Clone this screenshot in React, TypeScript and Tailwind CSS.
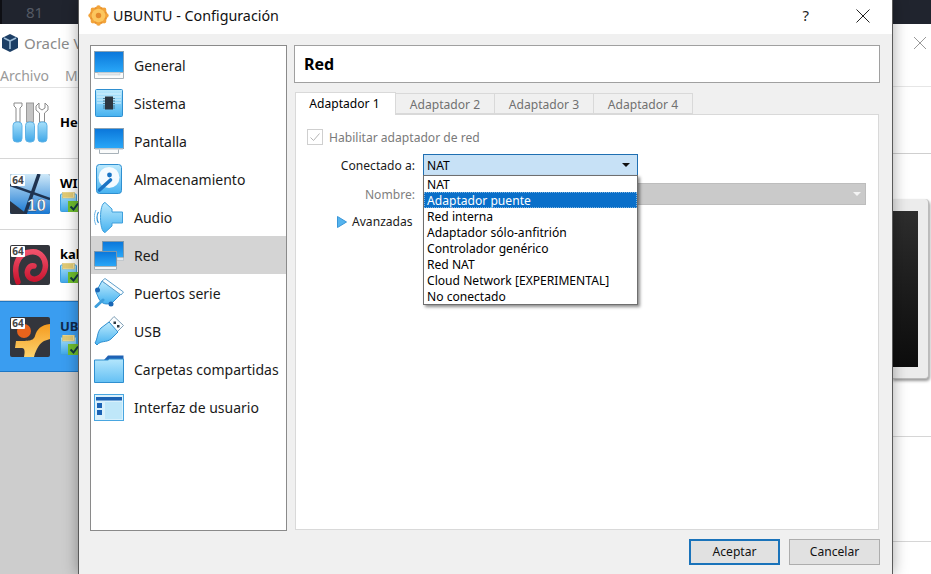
const Gear = () => (
  <svg width="21" height="21" viewBox="0 0 20 20">
    <circle cx="10" cy="10" r="8.5" fill="#e8912d" />
    <g fill="#f2a33a">
      <circle cx="10" cy="2.5" r="2.2" />
      <circle cx="10" cy="17.5" r="2.2" />
      <circle cx="2.5" cy="10" r="2.2" />
      <circle cx="17.5" cy="10" r="2.2" />
      <circle cx="4.7" cy="4.7" r="2.2" />
      <circle cx="15.3" cy="4.7" r="2.2" />
      <circle cx="4.7" cy="15.3" r="2.2" />
      <circle cx="15.3" cy="15.3" r="2.2" />
    </g>
    <circle cx="10" cy="10" r="6.5" fill="#fcc65e" />
    <circle cx="10" cy="10" r="2.6" fill="#e58a2c" />
  </svg>
);

const Gradients = () => (
  <svg className="absolute w-0 h-0">
    <defs>
      <linearGradient id="screen" x1="0" y1="0" x2="0" y2="1">
        <stop offset="0" stopColor="#0a76da" />
        <stop offset="1" stopColor="#2aa8f8" />
      </linearGradient>
      <linearGradient id="light" x1="0" y1="0" x2="0" y2="1">
        <stop offset="0" stopColor="#bdeafd" />
        <stop offset="1" stopColor="#46b2f0" />
      </linearGradient>
      <linearGradient id="folder" x1="0" y1="0" x2="0" y2="1">
        <stop offset="0" stopColor="#b4e6fc" />
        <stop offset="1" stopColor="#64c0f4" />
      </linearGradient>
      <linearGradient id="handle" x1="0" y1="0" x2="0" y2="1">
        <stop offset="0" stopColor="#a8e0fa" />
        <stop offset="1" stopColor="#3fa7e8" />
      </linearGradient>
      <linearGradient id="ubu" x1="0" y1="0" x2="0" y2="1">
        <stop offset="0" stopColor="#f59a1e" />
        <stop offset="1" stopColor="#fcd36e" />
      </linearGradient>
      <linearGradient id="kali" x1="0" y1="0" x2="0" y2="1">
        <stop offset="0" stopColor="#f0506a" />
        <stop offset="1" stopColor="#c8142e" />
      </linearGradient>
      <linearGradient id="win" x1="0" y1="0" x2="0" y2="1">
        <stop offset="0" stopColor="#cfe9f9" />
        <stop offset="1" stopColor="#1878d2" />
      </linearGradient>
    </defs>
  </svg>
);

const icons: Record<string, React.ReactNode> = {
  General: (
    <svg width="30" height="28" viewBox="0 0 30 28">
      <rect x="0.5" y="0.5" width="29" height="21" fill="url(#screen)" stroke="#8aa2b4" />
      <path d="M.5 21.5h29v6H.5z" fill="#fafbfb" stroke="#a8b2b9" />
      <path d="M4 21.5h22v2.5H4z" fill="#e2e8ec" stroke="#b9c4cb" strokeWidth="0.5" />
    </svg>
  ),
  Sistema: (
    <svg width="28" height="28" viewBox="0 0 28 28">
      <rect x="0.5" y="0.5" width="27" height="27" rx="1" fill="url(#light)" stroke="#2f8fd0" />
      <path d="M2 5h24M2 8h24M2 11h24M2 14h24" stroke="#d6f2fe" strokeWidth="1" />
      <rect x="10" y="7.5" width="8" height="13" fill="#2c3640" />
      <path d="M8 9.5h2M8 12h2M8 14.5h2M8 17h2M8 19h2M18 9.5h2M18 12h2M18 14.5h2M18 17h2M18 19h2" stroke="#3a6478" strokeWidth="0.8" />
    </svg>
  ),
  Pantalla: (
    <svg width="30" height="26" viewBox="0 0 30 26">
      <rect x="0.5" y="0.5" width="29" height="20" fill="url(#screen)" stroke="#8aa2b4" />
      <path d="M5.5 20.5h19v5h-19z" fill="#fafbfb" stroke="#a8b2b9" />
      <path d="M1 20.5h28v1.2H1z" fill="#c9d2d8" />
    </svg>
  ),
  Almacenamiento: (
    <svg width="26" height="30" viewBox="0 0 26 30">
      <rect x="0.5" y="0.5" width="25" height="29" rx="3" fill="url(#light)" stroke="#2f8fd0" />
      <circle cx="13" cy="13.5" r="10.5" fill="#f4fbff" />
      <circle cx="13.5" cy="11" r="2.4" fill="#1a74c4" />
      <path d="M3.5 26 14.5 16" stroke="#1a74c4" strokeWidth="3.6" strokeLinecap="round" />
    </svg>
  ),
  Audio: (
    <svg width="30" height="31" viewBox="0 0 30 31">
      <path d="M11 .5 18 7V10h10.5v11H18v3L11 30.5C8 30 6.5 23 6.5 15.5S8 1 11 .5Z" fill="url(#light)" stroke="#3e9fdc" />
      <path d="M4.5 10C2.5 13 2.5 18 4.5 21" fill="none" stroke="#2f8fd0" strokeWidth="1.2" />
      <path d="M2 8C-.3 13-.3 18 2 23" fill="none" stroke="#6bb4e6" />
    </svg>
  ),
  Red: (
    <svg width="30" height="29" viewBox="0 0 30 29">
      <rect x="8.5" y="0.5" width="21" height="16" fill="url(#screen)" stroke="#7d98ad" />
      <path d="M23 16.5h6.5v3H23z" fill="#dfe8ee" stroke="#a8b2b9" strokeWidth="0.5" />
      <rect x="0.5" y="10.5" width="22" height="15" fill="#fff" />
      <rect x="0.5" y="10.5" width="22" height="15" fill="url(#screen)" stroke="#7d98ad" />
      <path d="M.5 25.5h22v3H.5z" fill="#f2f5f7" stroke="#a8b2b9" />
    </svg>
  ),
  'Puertos serie': (
    <svg width="30" height="30" viewBox="0 0 30 30">
      <path d="M8 3 27 16 18 25C12 27 8 26 5 21L2 14Z" fill="url(#light)" stroke="#2f8fd0" />
      <path d="M11 .5 29.5 14 27 17 8 3Z" fill="#f8fcfe" stroke="#5f9fca" />
      <circle cx="3.5" cy="12" r="2.5" fill="#1a66b4" />
      <circle cx="17" cy="26" r="2.5" fill="#1a66b4" />
      <path d="M9 22 2 28.5" stroke="#3e9fdc" strokeWidth="3" strokeLinecap="round" />
    </svg>
  ),
  USB: (
    <svg width="30" height="30" viewBox="0 0 30 30">
      <path d="M20 .5 29.5 9.5 23 16 14 7Z" fill="#fbfdfe" stroke="#7f9fb6" />
      <path d="M15 6 24 16 17 23C12 27 7 24 3 29L1 27C4 22 3 16 7 12Z" fill="url(#light)" stroke="#2f8fd0" />
      <path d="M19.5 5.5h2.5V8h-2.5zM23 9h2.5v2.5H23z" fill="#2e3a42" />
    </svg>
  ),
  'Carpetas compartidas': (
    <svg width="30" height="28" viewBox="0 0 30 28">
      <path d="M10 5 14 .5H29.5V8H10Z" fill="#1f62b4" />
      <path d="M.5 5H11l3 0 1.5-1H29.5V27.5H.5Z" fill="url(#folder)" stroke="#2f8fd0" />
    </svg>
  ),
  'Interfaz de usuario': (
    <svg width="30" height="27" viewBox="0 0 30 27">
      <rect x="0.5" y="0.5" width="29" height="26" fill="#d9f1fc" stroke="#49a6e0" />
      <rect x="2" y="3" width="26" height="3.5" fill="#1b62b4" />
      <rect x="3" y="9" width="5" height="5" fill="#1b62b4" />
      <rect x="3" y="16" width="5" height="5" fill="#1b62b4" />
      <rect x="11" y="8" width="17" height="17" fill="#bfe7f9" />
    </svg>
  ),
};

const sections = ['General', 'Sistema', 'Pantalla', 'Almacenamiento', 'Audio', 'Red', 'Puertos serie', 'USB', 'Carpetas compartidas', 'Interfaz de usuario'];
const options = ['NAT', 'Adaptador puente', 'Red interna', 'Adaptador sólo-anfitrión', 'Controlador genérico', 'Red NAT', 'Cloud Network [EXPERIMENTAL]', 'No conectado'];

const Badge = () => (
  <span className="absolute left-[1px] top-[1px] w-[14px] h-[11px] bg-white text-[#444] text-[10px] font-bold leading-[11px] text-center rounded-[1px]">64</span>
);

const Status = () => (
  <svg width="20" height="20" viewBox="0 0 20 20" className="mt-[2px]">
    <rect x="0.5" y="2" width="16" height="17.5" rx="1" fill="url(#handle)" stroke="#3f9fe0" />
    <rect x="2.5" y="0" width="12" height="6" fill="#f2df9a" stroke="#c9b465" strokeWidth="0.5" />
    <path d="M4 1v4M6 1v4M8 1v4M10 1v4M12 1v4" stroke="#c7a83c" strokeWidth="0.8" />
    <rect x="8" y="9" width="12" height="11" fill="#6fbe2e" />
    <path d="m10.5 14.5 3 3 4.5-6" fill="none" stroke="#123a46" strokeWidth="2" />
  </svg>
);

const VmRow = ({ name, selected, art }: { name: string; selected?: boolean; art: React.ReactNode }) => (
  <div className={`h-[71px] flex items-center pl-[10px] gap-[10px] border-b ${selected ? 'bg-[#3a9df0] border-[#1d76c4] border-t' : 'bg-white border-[#d6d6d6]'}`}>
    <div className="relative w-[40px] h-[40px] rounded-[2px] bg-[#33353c] shrink-0 overflow-hidden">
      {art}
      <Badge />
    </div>
    <div className="flex flex-col">
      <span className={`font-bold text-[13px] leading-[14px] ${selected ? 'text-[#10294d]' : 'text-black'}`}>{name}</span>
      <Status />
    </div>
  </div>
);

const BackWindow = () => (
  <div className="absolute inset-0 flex flex-col bg-white">
    <div className="h-[24px] bg-[#20242e] border-l-[2px] border-[#0e0f14] pl-[24px] text-[#555a64] text-[15px] leading-[24px]">81</div>
    <div className="h-[40px] flex items-center pb-[2px] text-[#8a8a8a] text-[15px]">
      <svg width="20" height="20" viewBox="0 0 20 20">
        <path d="M10 1 18 5v10l-8 4-8-4V5Z" fill="#1d3f66" />
        <path d="M10 8 4 5M10 8l6-3M10 8v8" stroke="#9dbcd6" strokeWidth="1.6" />
      </svg>
      <span className="ml-[4px]">Oracle VM</span>
    </div>
    <div className="h-[24px] flex items-center gap-[16px] text-[#9a9a9a] text-[14px] border-b border-[#e2e2e2]">
      <span>Archivo</span>
      <span>Máquina</span>
    </div>
    <div className="flex flex-1">
      <div className="w-[300px] flex flex-col bg-[#cdcdcd] shrink-0">
        <div className="h-[71px] bg-white border-b border-[#d6d6d6] flex items-center pl-[12px] gap-[11px]">
          <svg width="37" height="42" viewBox="0 0 37 42">
            <path d="M2 1h8v3L8 6v14H4V6L2 4z" fill="#fff" stroke="#8a8a8a" />
            <rect x="14.5" y="1" width="7" height="19" fill="#c4c4c4" stroke="#9a9a9a" />
            <path d="M27 1v5l3 2 3-2V1l3 3v4l-3.5 3v9h-5v-9L24 8V4Z" fill="#fff" stroke="#8a8a8a" />
            <rect x="1" y="20" width="9" height="20" rx="3.5" fill="url(#handle)" stroke="#5fb2e6" />
            <rect x="13.5" y="20" width="9" height="20" rx="3.5" fill="url(#handle)" stroke="#5fb2e6" />
            <rect x="26" y="20" width="9" height="20" rx="3.5" fill="url(#handle)" stroke="#5fb2e6" />
          </svg>
          <span className="font-bold text-[13px] text-black">Herramientas</span>
        </div>
        <VmRow
          name="WIN10"
          art={
            <svg width="40" height="40" viewBox="0 0 40 40" className="absolute inset-0">
              <rect width="40" height="40" fill="url(#win)" />
              <path d="M0 27 17 40H0Z" fill="#2b3442" />
              <path d="M29 0 15 40" stroke="#1f3350" strokeWidth="3.5" />
              <path d="M0 11 40 25" stroke="#1f3350" strokeWidth="2.5" />
              <text x="17" y="37" fontSize="17" fontWeight="bold" fill="#fff" stroke="#16324f" strokeWidth="0.4" fontFamily="'Liberation Sans', sans-serif">10</text>
            </svg>
          }
        />
        <VmRow
          name="kali"
          art={
            <svg width="40" height="40" viewBox="0 0 40 40" className="absolute inset-0">
              <path d="M8 37C3 24 6 9 20 7 31 5 37 15 35 24 33 33 24 37 19 32 15 27 19 20 24 21" fill="none" stroke="url(#kali)" strokeWidth="5.5" strokeLinecap="round" />
            </svg>
          }
        />
        <VmRow
          name="UBUNTU"
          selected
          art={
            <svg width="40" height="40" viewBox="0 0 40 40" className="absolute inset-0">
              <circle cx="14" cy="14" r="7" fill="#e8631c" />
              <path d="M40 7C31 8 27 12 25 19 23 24 20 24 6 24L5 31H12C15 31 15 35 14 40H24C26 32 30 26 34 24L40 22Z" fill="url(#ubu)" />
            </svg>
          }
        />
      </div>
    </div>
  </div>
);

const RightBack = () => (
  <div className="absolute left-[892px] top-[24px] right-0 bottom-0 bg-white flex flex-col">
    <div className="h-[63px] flex items-start justify-end pr-[5px] pt-[13px] border-b border-[#e6e6e6]">
      <svg width="12" height="12" viewBox="0 0 12 12"><path d="M0 0 12 12M12 0 0 12" stroke="#999" /></svg>
    </div>
    <div className="h-[67px] border-b border-[#cfcfcf]" />
    <div className="h-[45px]" />
    <div className="h-[180px] w-[37px] bg-[#ececec] rounded-r-[4px] border-r border-b border-[#bbb] shadow-[1px_2px_3px_#999] flex flex-col justify-center">
      <div className="h-[156px] w-[26px] bg-gradient-to-b from-[#2e2e2e] to-[#0d0d0d]" />
    </div>
    <div className="h-[58px] border-b border-[#d6d6d6]" />
    <div className="h-[105px] border-b border-[#d6d6d6]" />
  </div>
);

const Tab = ({ label, active }: { label: string; active?: boolean }) => (
  <div className={active
    ? 'h-[23px] w-[101px] bg-white border border-b-0 border-[#d9d9d9] text-black text-center leading-[21px] -mb-px relative pr-[2px]'
    : 'h-[21px] w-[99px] bg-[#f0f0f0] border border-l-0 border-[#d9d9d9] text-[#707070] text-center leading-[21px]'}>
    {label}
  </div>
);

export default function App() {
  return (
    <div className="relative w-[931px] h-[574px] overflow-hidden bg-white text-[12.1px] [font-family:'Noto_Sans',sans-serif]">
      <Gradients />
      <BackWindow />
      <RightBack />
      <div className="absolute left-[78px] top-0 w-[815px] h-[574px] flex flex-col bg-[#f0f0f0] border-x border-[#5a5a5a] shadow-[0_0_14px_rgba(0,0,0,0.35)]">
        <div className="h-[34px] bg-white flex items-center pl-[9px] pb-[3px] shrink-0">
          <Gear />
          <span className="ml-[4px] text-[14.3px] text-[#111]">UBUNTU - Configuración</span>
          <span className="ml-auto text-[15px] text-[#222] mr-[47px]">?</span>
          <svg width="14" height="14" viewBox="0 0 14 14" className="mr-[22px]"><path d="M.5.5l13 13M13.5.5l-13 13" stroke="#222" /></svg>
        </div>
        <div className="flex-1 flex gap-[7px] pl-[11px] pr-[12px] pt-[11px]">
          <div className="w-[197px] h-[486px] bg-white border border-[#8a8a8a]">
            {sections.map((s) => (
              <div key={s} className={`h-[38px] flex items-center pl-[3px] ${s === 'Red' ? 'bg-[#d4d4d4]' : ''}`}>
                <div className="w-[30px] h-[32px] flex items-center justify-center shrink-0">{icons[s]}</div>
                <span className="ml-[10px] text-[14px] text-[#1a1a1a]">{s}</span>
              </div>
            ))}
          </div>
          <div className="flex-1 flex flex-col">
            <div className="h-[38px] bg-white border border-[#a0a0a0] flex items-center pl-[9px] text-[16px] font-bold text-black shrink-0">Red</div>
            <div className="flex items-end mt-[9px] ml-[1px] shrink-0 relative z-10">
              <Tab label="Adaptador 1" active />
              <Tab label="Adaptador 2" />
              <Tab label="Adaptador 3" />
              <Tab label="Adaptador 4" />
            </div>
            <div className="ml-[1px] w-[584px] h-[416px] bg-white border border-[#d9d9d9] relative pt-[14px] pr-[12px]">
              <div className="h-[16px] flex items-center pl-[11px] text-[#7a7a7a]">
                <span className="w-[16px] h-[16px] border border-[#cfcfcf] flex items-center justify-center mr-[6px]">
                  <svg width="12" height="12" viewBox="0 0 12 12"><path d="m1.5 6.5 3 3 6-7" fill="none" stroke="#b5b5b5" /></svg>
                </span>
                <span className="pt-[2px]">Habilitar adaptador de red</span>
              </div>
              <div className="flex items-center mt-[9px]">
                <span className="w-[119px] text-right text-[#1a1a1a] pt-[2px]">Conectado a:</span>
                <div className="ml-[8px] w-[215px] h-[22px] bg-[#c7e1f6] border border-[#1f6fb2] flex items-center justify-between pl-[3px] pr-[7px] text-black">
                  <span className="pt-[2px]">NAT</span>
                  <svg width="8" height="4" viewBox="0 0 8 4"><path d="M0 0h8L4 4Z" fill="#111" /></svg>
                </div>
              </div>
              <div className="flex items-center mt-[7px]">
                <span className="w-[119px] text-right text-[#808080] pt-[2px]">Nombre:</span>
                <div className="ml-[8px] flex-1 h-[22px] bg-[#cacaca] border border-[#bdbdbd] flex items-center justify-end pr-[4px]">
                  <svg width="8" height="4" viewBox="0 0 8 4"><path d="M0 0h8L4 4Z" fill="#f4f4f4" /></svg>
                </div>
              </div>
              <div className="h-[16px] flex items-center mt-[9px] pl-[41px] text-[#1a1a1a]">
                <svg width="10" height="12" viewBox="0 0 10 12" className="mr-[5px]"><path d="M.5.5 9.5 6 .5 11.5Z" fill="#55b4ee" stroke="#3a96d8" /></svg>
                Avanzadas
              </div>
              <div className="absolute left-[127px] top-[60px] w-[215px] h-[130px] bg-white border border-[#6f6f6f] shadow-[2px_2px_3px_rgba(0,0,0,0.45)] leading-[18px] text-black">
                {options.map((o) => (
                  <div key={o} className={`h-[16px] pl-[3px] whitespace-nowrap ${o === 'Adaptador puente' ? 'bg-[#0a6fc9] text-white outline-1 outline-dotted -outline-offset-1 outline-[#7fb4de]' : ''}`}>{o}</div>
                ))}
              </div>
            </div>
            <div className="flex justify-end gap-[9px] mt-[9px]">
              <div className="w-[91px] h-[26px] bg-[#e1e1e1] border-2 border-[#1a73ba] flex items-center justify-center text-[#111] pt-[1px]">Aceptar</div>
              <div className="w-[91px] h-[26px] bg-[#e1e1e1] border border-[#adadad] flex items-center justify-center text-[#111] pt-[1px]">Cancelar</div>
            </div>
          </div>
        </div>
      </div>
    </div>
  );
}
